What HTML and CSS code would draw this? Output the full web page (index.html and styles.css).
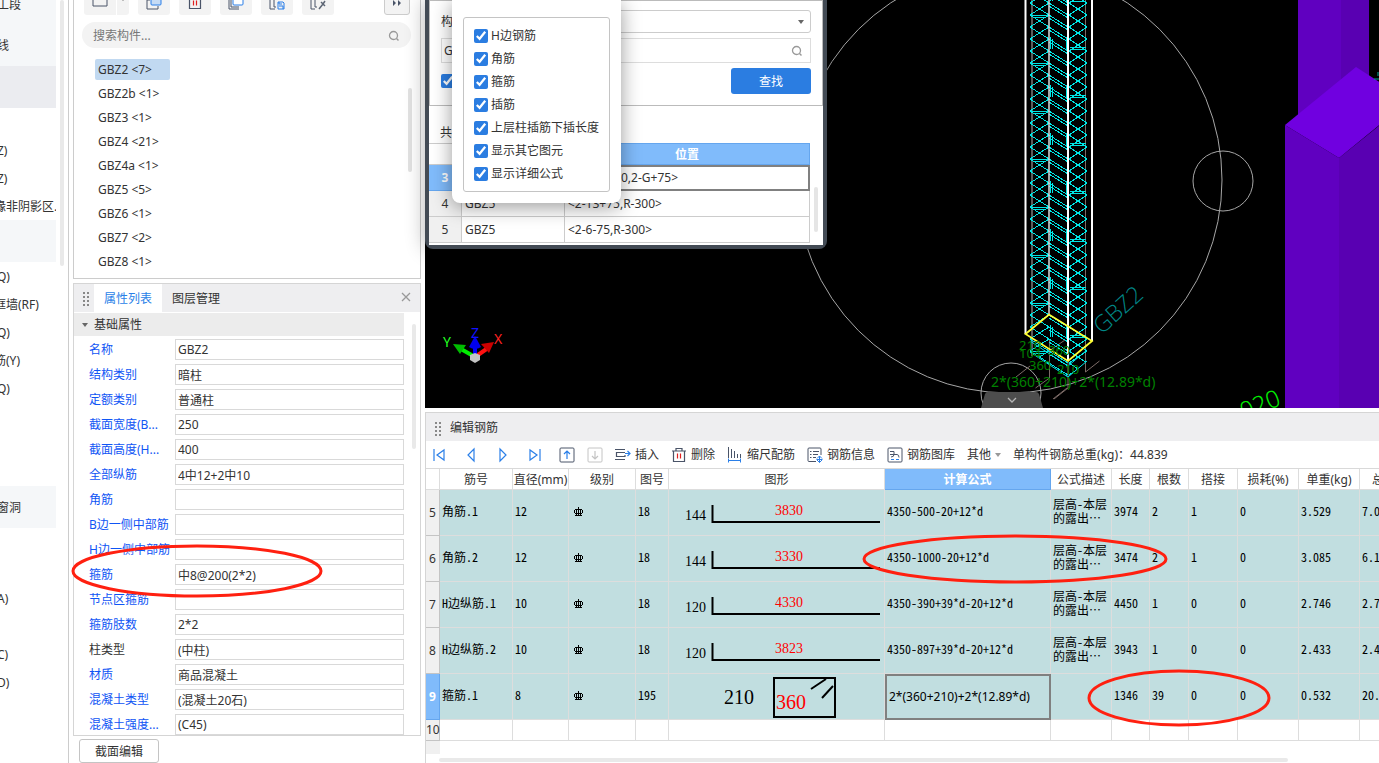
FILE: index.html
```html
<!DOCTYPE html>
<html lang="zh-CN">
<head>
    <meta charset="UTF-8">
    <meta name="viewport" content="width=device-width, initial-scale=1.0">
    <title>编辑钢筋</title>
    <link rel="stylesheet" href="styles.css">
</head>
<body>
    <svg class="sprite" width="0" height="0" aria-hidden="true">
        <symbol id="search" viewBox="0 0 12 12"><circle cx="5.5" cy="5.5" r="4" fill="none" stroke="#999" stroke-width="1.3"/><path d="M8.5 8.5l2 2" stroke="#999" stroke-width="1.5"/></symbol>
        <symbol id="trash" viewBox="0 0 16 16"><path d="M1 4h14M5 4V1.500h6V4M2.500 4v10.500h11V4" fill="none" stroke="#4a5468" stroke-width="1.200"/><path d="M6.500 6.500v5M9.500 6.500v5" stroke="#e02020" stroke-width="1.200"/></symbol>
        <symbol id="grade" viewBox="0 0 10 10"><path d="M4.500 0v9M2.500 2v7M6.500 2v7M1 2.500h7M0.500 3v3M8.500 3v3M1 6.500h7M1 8.500h7" fill="none" stroke="#000" shape-rendering="crispEdges"/></symbol>
    </svg>

    <div class="app">
        <nav class="nav">
            <a href="#" class="nav-first shade">工段</a>
            <a href="#" class="nav-group shade">线</a>
            <a href="#" class="nav-group current"></a>
            <a href="#"></a>
            <a href="#">Z)</a>
            <a href="#">Z)</a>
            <a href="#" class="long">缘非阴影区.</a>
            <a href="#" class="nav-group shade"></a>
            <a href="#">Q)</a>
            <a href="#" class="long">框墙(RF)</a>
            <a href="#">Q)</a>
            <a href="#" class="long">筋(Y)</a>
            <a href="#">Q)</a>
            <a href="#" class="nav-group"></a>
            <a href="#" class="nav-group"></a>
            <a href="#" class="nav-group shade">窗洞</a>
            <a href="#"></a>
            <a href="#"></a>
            <a href="#">A)</a>
            <a href="#"></a>
            <a href="#">C)</a>
            <a href="#">D)</a>
            <span class="nav-scroll"></span>
        </nav>

        <aside class="side">
            <section class="list-panel">
                <div class="list-tools">
                    <button class="split" aria-label="新建"><svg width="16" height="16"><path d="M1 1h14v14H1z" fill="none" stroke="#4a5468"/></svg><i class="caret"></i></button>
                    <button aria-label="复制"><svg width="16" height="16"><path d="M4 6H1v9h11v-3" fill="none" stroke="#4a5468"/><rect x="5" y="1" width="10" height="10" rx="1" fill="#c5dbf5" stroke="#2a7fe8"/></svg></button>
                    <button aria-label="删除"><svg width="16" height="16"><use href="#trash"/></svg></button>
                    <button aria-label="层间复制"><svg width="16" height="16"><path d="M1 3v12h10M3 3v10h8" fill="none" stroke="#4a5468"/><rect x="5" y="1" width="10" height="10" rx="1" fill="#fff" stroke="#2a7fe8"/></svg></button>
                    <button aria-label="存档"><svg width="16" height="16"><path d="M6 15H1V1M5 1v12h2M10 3v2M14 3v2" fill="none" stroke="#4a5468"/><path d="M9 8h5l1 1v6H9zM10 12h4v3M10 8v2h3" fill="none" stroke="#2a7fe8"/></svg></button>
                    <button aria-label="拾取"><svg width="16" height="16"><path d="M5 15H1V1M5 1v12h2M10 3v2" fill="none" stroke="#4a5468"/><path d="M9 15l4-5M11 8l4 4M13 10l2-3" stroke="#5d6675" stroke-width="1.500"/></svg></button>
                    <button class="more" aria-label="更多"><svg width="12" height="16"><path d="M2 6l3 3-3 3zM7 6l3 3-3 3z" fill="#4a5468"/></svg></button>
                </div>
                <div class="search">
                    <input type="text" placeholder="搜索构件..." aria-label="搜索构件">
                    <svg width="12" height="12"><use href="#search"/></svg>
                </div>
                <ul class="tree">
                    <li class="selected">GBZ2 &lt;7&gt;</li>
                    <li>GBZ2b &lt;1&gt;</li>
                    <li>GBZ3 &lt;1&gt;</li>
                    <li>GBZ4 &lt;21&gt;</li>
                    <li>GBZ4a &lt;1&gt;</li>
                    <li>GBZ5 &lt;5&gt;</li>
                    <li>GBZ6 &lt;1&gt;</li>
                    <li>GBZ7 &lt;2&gt;</li>
                    <li>GBZ8 &lt;1&gt;</li>
                </ul>
                <span class="list-scroll"></span>
            </section>

            <section class="props">
                <div class="tabs">
                    <span class="grip"></span>
                    <button class="tab active">属性列表</button>
                    <button class="tab">图层管理</button>
                    <button class="close" aria-label="关闭"><svg width="10" height="10"><path d="M1 1l8 8M9 1l-8 8" stroke="#999" stroke-width="1.300"/></svg></button>
                </div>
                <div class="props-body">
                    <h3><i class="caret"></i>基础属性</h3>
                    <div class="row"><label for="p1">名称</label><input id="p1" value="GBZ2"></div>
                    <div class="row"><label for="p2">结构类别</label><input id="p2" value="暗柱"></div>
                    <div class="row"><label for="p3">定额类别</label><input id="p3" value="普通柱"></div>
                    <div class="row"><label for="p4">截面宽度(B...</label><input id="p4" value="250"></div>
                    <div class="row"><label for="p5">截面高度(H...</label><input id="p5" value="400"></div>
                    <div class="row"><label for="p6">全部纵筋</label><input id="p6" value="4中12+2中10"></div>
                    <div class="row"><label for="p7">角筋</label><input id="p7"></div>
                    <div class="row"><label for="p8">B边一侧中部筋</label><input id="p8"></div>
                    <div class="row"><label for="p9">H边一侧中部筋</label><input id="p9"></div>
                    <div class="row"><label for="p10">箍筋</label><input id="p10" value="中8@200(2*2)"></div>
                    <div class="row"><label for="p11">节点区箍筋</label><input id="p11"></div>
                    <div class="row"><label for="p12">箍筋肢数</label><input id="p12" value="2*2"></div>
                    <div class="row"><label for="p13" class="plain">柱类型</label><input id="p13" value="(中柱)"></div>
                    <div class="row"><label for="p14">材质</label><input id="p14" value="商品混凝土"></div>
                    <div class="row"><label for="p15">混凝土类型</label><input id="p15" value="(混凝土20石)"></div>
                    <div class="row"><label for="p16">混凝土强度...</label><input id="p16" value="(C45)"></div>
                    <span class="props-scroll"></span>
                </div>
            </section>
            <button class="section-edit">截面编辑</button>
        </aside>

        <main class="main">
            <section class="canvas">
                <svg class="model" viewBox="425 0 954 408" preserveAspectRatio="xMinYMin slice">
                    <defs>
                        <pattern id="ties" patternUnits="userSpaceOnUse" x="1030" y="15" width="58" height="48">
                            <path fill="none" stroke="#00e5e5" shape-rendering="crispEdges" d="
                                M19 -12L0 0L19 12M19 0L0 12L19 24M19 12L0 24L19 36M19 24L0 36L19 48M19 36L0 48L19 60
                                M19 -12l19 12M19 -9l19 12M19 0l19 12M19 3l19 12M19 12l19 12M19 15l19 12M19 24l19 12M19 27l19 12M19 36l19 12M19 39l19 12
                                M39 -12L57 0L39 12M39 0L57 12L39 24M39 12L57 24L39 36M39 24L57 36L39 48M39 36L57 48L39 60
                                M1 0.500h17M3 2.500h13M40 32.500h16M40 34.500h16M20.500 22v12M22.500 24v10M36.500 24v11"/>
                        </pattern>
                    </defs>
                    <g fill="none" stroke="#a6a6a6">
                        <circle cx="1009" cy="180" r="213"/>
                        <circle cx="1223" cy="181" r="30"/>
                        <circle cx="1011" cy="393" r="30"/>
                    </g>
                    <path d="M1032 0v356" stroke="#5c5c5c" stroke-width="2"/>
                    <path d="M1085.500 0v372l14-11M1049.500 340v38l-14 10M1068 360v28l-14 11M1067 388l-14 11M1065 340l-16 11M1030 366l-14 11" fill="none" stroke="#7d6c68"/>
                    <path d="M1030 0h58v360l-20 17-38-25z" fill="url(#ties)"/>
                    <path d="M1030 352l38 25 19-16M1030 341l38 25 19-16" fill="none" stroke="#00e5e5"/>
                    <path d="M1025.500 0v334M1092 0v341M1068 0v361" stroke="#fff" stroke-width="2"/>
                    <path d="M1049 0v314" stroke="#ddd" stroke-width="1.500"/>
                    <path d="M1025.500 334L1049 314.500L1092 341L1068 361z" fill="none" stroke="#ff3" stroke-width="1.800"/>
                    <g class="dims">
                        <text x="1019" y="350">210</text>
                        <text x="1019" y="358">104</text>
                        <text x="1048" y="355">360</text>
                        <text x="1029" y="370">360</text>
                        <text x="1057" y="374">210</text>
                        <text x="991" y="387" class="sum">2*(360+210)+2*(12.89*d)</text>
                    </g>
                    <text class="mark" transform="translate(1102 335) rotate(-42)">GBZ2</text>
                    <text class="axis-no" transform="translate(1244 420) rotate(-22)">020</text>
                    <path d="M981 408l4-14q1-2 3-2h48q2 0 3 2l4 14z" fill="#4d4d4d"/>
                    <path d="M1008 398l4 4 4-4" fill="none" stroke="#b5b5b5" stroke-width="1.300"/>
                    <path d="M1298 0h43v130h-43z" fill="#6000c0"/>
                    <path d="M1341 0h28v110h-28z" fill="#5900b2"/>
                    <path d="M1285 125l54 33v250h-54z" fill="#6000c0"/>
                    <path d="M1339 158l61-49v299h-61z" fill="#5900b2"/>
                    <path d="M1285 125L1356 67l44 28v13l-61 50z" fill="#7000e0"/>
                    <path d="M1374 79h5M1378 72v4" stroke="#0a9" />
                    <!-- axis tripod -->
                    <path d="M475 357l-14-8" stroke="#0e0" stroke-width="4"/><path d="M453 344l13 1-6 9z" fill="#0b0"/>
                    <path d="M475 357l13-9" stroke="#f11" stroke-width="4"/><path d="M494 342l-13 2 8 9z" fill="#c00"/>
                    <path d="M475 357v-12" stroke="#00f" stroke-width="4"/><path d="M475 336l6 11q-6 4-12 0z" fill="#00e"/>
                    <path d="M470 355l5-2 5 2v5l-5 3-5-3z" fill="#c4c4c4"/>
                    <text class="axis" x="443" y="347" fill="#2f2">Y</text>
                    <text class="axis" x="471" y="338" fill="#11f">Z</text>
                    <text class="axis" x="494" y="344" fill="#f22">X</text>
                </svg>

                <div class="dialog">
                    <div class="find-box">
                        <label for="kind">构</label>
                        <div class="find-kind">
                            <select id="kind"><option></option></select>
                            <i class="caret"></i>
                        </div>
                        <div class="find-name">
                            <input type="text" value="G" aria-label="名称">
                            <svg width="12" height="12"><use href="#search"/></svg>
                        </div>
                        <div class="find-foot">
                            <input type="checkbox" checked aria-label="精确查找">
                            <button class="find-btn">查找</button>
                        </div>
                    </div>
                    <p class="found">共</p>
                    <table class="found-table">
                        <thead><tr><th></th><th></th><th class="hot">位置</th></tr></thead>
                        <tbody>
                            <tr><th class="hot">3</th><td></td><td class="cell-on"><span>0,2-G+75&gt;</span></td></tr>
                            <tr><th>4</th><td>GBZ5</td><td>&lt;2-13+75,R-300&gt;</td></tr>
                            <tr><th>5</th><td>GBZ5</td><td>&lt;2-6-75,R-300&gt;</td></tr>
                        </tbody>
                    </table>
                    <span class="found-scroll"></span>
                    <div class="popup">
                        <div class="popup-box">
                            <label><input type="checkbox" checked>H边钢筋</label>
                            <label><input type="checkbox" checked>角筋</label>
                            <label><input type="checkbox" checked>箍筋</label>
                            <label><input type="checkbox" checked>插筋</label>
                            <label><input type="checkbox" checked>上层柱插筋下插长度</label>
                            <label><input type="checkbox" checked>显示其它图元</label>
                            <label><input type="checkbox" checked>显示详细公式</label>
                        </div>
                    </div>
                </div>
            </section>

            <section class="rebar">
                <div class="rebar-title"><span class="grip"></span>编辑钢筋</div>
                <div class="rebar-tools">
                    <div class="step">
                        <button aria-label="首行"><svg width="16" height="16"><path d="M3 2v12M13 3v10L6 8z" fill="none" stroke="#2a7fe8" stroke-width="1.200"/></svg></button>
                        <button aria-label="上一行"><svg width="16" height="16"><path d="M11 2v12L5 8z" fill="none" stroke="#2a7fe8" stroke-width="1.200"/></svg></button>
                        <button aria-label="下一行"><svg width="16" height="16"><path d="M5 2v12l6-6z" fill="none" stroke="#2a7fe8" stroke-width="1.200"/></svg></button>
                        <button aria-label="末行"><svg width="16" height="16"><path d="M13 2v12M3 3v10l7-5z" fill="none" stroke="#2a7fe8" stroke-width="1.200"/></svg></button>
                    </div>
                    <button aria-label="上移"><svg width="16" height="16"><rect x="1" y="1" width="14" height="14" rx="1" fill="none" stroke="#4a5468"/><path d="M8 12V4M5 7l3-3 3 3" fill="none" stroke="#2a7fe8" stroke-width="1.200"/></svg></button>
                    <button aria-label="下移"><svg width="16" height="16"><rect x="1" y="1" width="14" height="14" rx="1" fill="none" stroke="#c4c4c4"/><path d="M8 4v8M5 9l3 3 3-3" fill="none" stroke="#c4c4c4" stroke-width="1.200"/></svg></button>
                    <button><svg width="16" height="16"><path d="M0 2.500h10M0 12.500h10M10 5.500H1.500v4H10V8" fill="none" stroke="#4a5468" stroke-width="1.200"/><path d="M10 6.500h5M12.500 4l2.500 2.500L12.500 9" fill="none" stroke="#2a7fe8" stroke-width="1.200"/></svg>插入</button>
                    <button><svg width="16" height="16"><use href="#trash"/></svg>删除</button>
                    <button><svg width="16" height="16"><path d="M1.500 0v11M4.500 2v9M7.500 4v7M10.500 7v4M13.500 7v4" stroke="#4a5468"/><path d="M1 13.500h12M1.500 11.500v4M13.500 11.500v4" stroke="#2a7fe8"/></svg>缩尺配筋</button>
                    <button><svg width="16" height="16"><path d="M9 14.500H2q-1 0-1-1V2q0-1 1-1h11q1 0 1 1v6M6 4.500h6M6 7.500h5M6 10.500h3M3 4.500h1.500M3 7.500h1.500M3 10.500h1.500" fill="none" stroke="#4a5468"/><path d="M9.500 12.500h6M12.500 9v6.500M10 11.500l2.500-2.500 2.500 2.500M10 13l2.500 2.500L15 13" fill="none" stroke="#2a7fe8"/></svg>钢筋信息</button>
                    <button><svg width="16" height="16"><rect x="1" y="1" width="14" height="14" rx="1" fill="none" stroke="#4a5468"/><path d="M3 4.500h4v3H3M4 10q3 0 3-2.500h3q2 0 2 3" fill="none" stroke="#4a5468"/><path d="M4 12.500h3M9 12.500h3" stroke="#2a7fe8"/></svg>钢筋图库</button>
                    <button>其他<i class="caret light"></i></button>
                    <span>单构件钢筋总重(kg)：44.839</span>
                </div>
                <div class="rebar-wrap">
                    <table class="rebar-table">
                        <colgroup><col class="c-no"><col class="c-name"><col class="c-dia"><col class="c-grade"><col class="c-fig"><col class="c-shape"><col class="c-calc"><col class="c-desc"><col class="c-len"><col class="c-cnt"><col class="c-lap"><col class="c-loss"><col class="c-wt"><col class="c-total"></colgroup>
                        <thead>
                            <tr><th></th><th>筋号</th><th>直径(mm)</th><th>级别</th><th>图号</th><th>图形</th><th class="hot">计算公式</th><th>公式描述</th><th>长度</th><th>根数</th><th>搭接</th><th>损耗(%)</th><th>单重(kg)</th><th class="cut">总</th></tr>
                        </thead>
                        <tbody>
                            <tr>
                                <th>5</th><td>角筋.1</td><td>12</td><td><svg width="10" height="10"><use href="#grade"/></svg></td><td>18</td>
                                <td class="shape"><svg width="215" height="45"><path d="M43.500 15v17H211" fill="none" stroke="#000" stroke-width="2"/><text x="16" y="30">144</text><text x="106" y="25" class="red">3830</text></svg></td>
                                <td>4350-500-20+12*d</td><td class="desc">层高-本层的露出…</td><td>3974</td><td>2</td><td>1</td><td>0</td><td>3.529</td><td>7.0</td>
                            </tr>
                            <tr>
                                <th>6</th><td>角筋.2</td><td>12</td><td><svg width="10" height="10"><use href="#grade"/></svg></td><td>18</td>
                                <td class="shape"><svg width="215" height="45"><path d="M43.500 15v17H211" fill="none" stroke="#000" stroke-width="2"/><text x="16" y="30">144</text><text x="106" y="25" class="red">3330</text></svg></td>
                                <td>4350-1000-20+12*d</td><td class="desc">层高-本层的露出…</td><td>3474</td><td>2</td><td>1</td><td>0</td><td>3.085</td><td>6.1</td>
                            </tr>
                            <tr>
                                <th>7</th><td>H边纵筋.1</td><td>10</td><td><svg width="10" height="10"><use href="#grade"/></svg></td><td>18</td>
                                <td class="shape"><svg width="215" height="45"><path d="M43.500 15v17H211" fill="none" stroke="#000" stroke-width="2"/><text x="16" y="30">120</text><text x="106" y="25" class="red">4330</text></svg></td>
                                <td>4350-390+39*d-20+12*d</td><td class="desc">层高-本层的露出…</td><td>4450</td><td>1</td><td>0</td><td>0</td><td>2.746</td><td>2.7</td>
                            </tr>
                            <tr>
                                <th>8</th><td>H边纵筋.2</td><td>10</td><td><svg width="10" height="10"><use href="#grade"/></svg></td><td>18</td>
                                <td class="shape"><svg width="215" height="45"><path d="M43.500 15v17H211" fill="none" stroke="#000" stroke-width="2"/><text x="16" y="30">120</text><text x="106" y="25" class="red">3823</text></svg></td>
                                <td>4350-897+39*d-20+12*d</td><td class="desc">层高-本层的露出…</td><td>3943</td><td>1</td><td>0</td><td>0</td><td>2.433</td><td>2.4</td>
                            </tr>
                            <tr>
                                <th class="hot">9</th><td>箍筋.1</td><td>8</td><td><svg width="10" height="10"><use href="#grade"/></svg></td><td>195</td>
                                <td class="shape"><svg width="215" height="45"><path d="M105 4h61v39h-61zM142 15l15-10M153 24l11-12" fill="none" stroke="#000" stroke-width="2"/><text x="55" y="30" class="big">210</text><text x="107" y="35" class="big red">360</text></svg></td>
                                <td class="cell-on">2*(360+210)+2*(12.89*d)</td><td></td><td>1346</td><td>39</td><td>0</td><td>0</td><td>0.532</td><td>20.</td>
                            </tr>
                            <tr class="blank"><th>10</th><td></td><td></td><td></td><td></td><td></td><td></td><td></td><td></td><td></td><td></td><td></td><td></td><td></td></tr>
                        </tbody>
                    </table>
                    <div class="rebar-foot"></div>
                    <div class="rebar-scroll"></div>
                </div>
            </section>
        </main>

        <svg class="notes" width="1379" height="763">
            <ellipse cx="197" cy="571" rx="124" ry="25"/>
            <ellipse cx="1015" cy="559" rx="151" ry="23"/>
            <ellipse cx="1179" cy="698" rx="90" ry="27"/>
        </svg>
    </div>
</body>
</html>
```
FILE: styles.css
```css
:root {
    --text: #333;
    --blue: #2a7fe8;
    --label: #0f55f5;
    --hot: #80bbfb;
    --line: #d9d9d9;
    --panel: #eeeef0;
    --teal: #c1dee0;
}

* {
    box-sizing: border-box;
    margin: 0;
    padding: 0;
}

body {
    background: #fff;
    color: var(--text);
    font-family: "Noto Sans", "Noto Sans CJK SC", sans-serif;
    font-size: 12px;
    line-height: 16px;
    overflow: hidden;
}

button,
input,
select {
    font: inherit;
    color: inherit;
    border: none;
    background: none;
}

button {
    cursor: pointer;
}

.sprite {
    position: absolute;
}

.app {
    display: flex;
    height: 100vh;
    position: relative;
}

.caret {
    display: inline-block;
    border: 3px solid transparent;
    border-top: 4px solid #666;
    border-bottom: none;
}

.caret.light {
    border-top-color: #999;
}

.grip {
    width: 8px;
    height: 15px;
    background: radial-gradient(circle, #888 1px, transparent 1px) 0 0 / 4px 4px;
}

/* left navigation */
.nav {
    position: relative;
    flex: none;
    width: 69px;
    overflow: hidden;
    border-right: 1px solid #ccc;
}

.nav a {
    display: block;
    width: 56px;
    height: 28px;
    line-height: 30px;
    text-indent: -3px;
    white-space: nowrap;
    color: var(--text);
    text-decoration: none;
    overflow: hidden;
}

.nav a.long {
    text-indent: -6px;
}

.nav a.nav-group {
    height: 42px;
    line-height: 44px;
}

.nav a.nav-first {
    height: 24px;
    line-height: 10px;
}

.nav a.shade {
    background: #f5f7f9;
}

.nav a.current {
    background: #ebecf0;
}

.nav-scroll {
    position: absolute;
    top: 0;
    left: 60px;
    width: 4px;
    height: 266px;
    border-radius: 2px;
    background: #e9e9e9;
}

/* component list + properties */
.side {
    display: flex;
    flex-direction: column;
    flex: none;
    width: 352px;
    padding-left: 4px;
}

.list-panel {
    position: relative;
    flex: 1;
    min-height: 0;
    border: 1px solid #ccc;
    border-top: none;
    overflow: hidden;
}

.list-tools {
    display: flex;
    align-items: flex-end;
    gap: 9px;
    height: 15px;
    padding: 0 10px;
}

.list-tools button {
    flex: none;
    width: 32px;
    height: 32px;
    padding-top: 8px;
    border-radius: 3px;
    background: #f3f3f3;
    line-height: 12px;
}

.list-tools .split {
    display: flex;
    gap: 12px;
    align-items: center;
    width: 45px;
    padding: 0 3px 0 8px;
    background: linear-gradient(90deg, #f3f3f3 32px, #fff 32px, #fff 33px, #f3f3f3 33px);
}

.list-tools .more {
    width: 26px;
    margin-left: auto;
    border: 1px solid #ccc;
}

.search {
    display: flex;
    align-items: center;
    height: 26px;
    margin: 7px 9px 0 8px;
    padding: 2px 11px 0;
    border-radius: 13px;
    background: #f3f3f3;
}

.search input {
    flex: 1;
    outline: none;
}

.search input::placeholder {
    color: #777;
}

.tree {
    list-style: none;
    padding: 11px 0 0 21px;
}

.tree li {
    width: 75px;
    height: 21px;
    margin-bottom: 3px;
    padding-left: 3px;
    line-height: 21px;
    border-radius: 2px;
    white-space: nowrap;
}

.tree .selected {
    background: #c1d9f1;
}

.list-scroll {
    position: absolute;
    top: 88px;
    right: 8px;
    width: 4px;
    height: 84px;
    border-radius: 2px;
    background: #e2e2e2;
}

.props {
    flex: none;
    margin-top: 4px;
    border: 1px solid #d5d5d5;
}

.tabs {
    display: flex;
    align-items: center;
    height: 28px;
    background: var(--panel);
}

.tabs .grip {
    margin: 0 4px 0 8px;
}

.tab {
    height: 28px;
    padding: 2px 10px 0;
}

.tab.active {
    background: #fff;
    color: var(--blue);
}

.close {
    margin-left: auto;
    padding-right: 9px;
}

.props-body {
    position: relative;
    height: 423px;
    padding: 1px 16px 0 0;
    overflow: hidden;
}

.props-body h3 {
    display: flex;
    align-items: center;
    gap: 6px;
    height: 23px;
    margin-bottom: 3px;
    padding-left: 8px;
    background: #ececec;
    font-size: 12px;
    font-weight: 400;
}

.row {
    display: flex;
    align-items: center;
    height: 21px;
    margin-bottom: 4px;
    padding-left: 15px;
    white-space: nowrap;
}

.row label {
    flex: none;
    width: 86px;
    color: var(--label);
}

.row label.plain {
    color: var(--text);
}

.row input {
    flex: 1;
    min-width: 0;
    height: 21px;
    padding: 0 2px;
    border: 1px solid var(--line);
}

.props-scroll {
    position: absolute;
    top: 12px;
    right: 4px;
    width: 4px;
    height: 125px;
    border-radius: 2px;
    background: #e9e9e9;
}

.section-edit {
    flex: none;
    width: 80px;
    height: 24px;
    margin: 3px 0 0 6px;
    padding-top: 1px;
    border: 1px solid #c4c4c4;
    border-radius: 3px;
}

/* drawing area */
.main {
    display: flex;
    flex-direction: column;
    flex: 1;
    min-width: 0;
    padding-left: 4px;
}

.canvas {
    position: relative;
    flex: 1;
    min-height: 0;
    background: #000;
}

.model {
    display: block;
    width: 100%;
    height: 100%;
}

.dims {
    fill: #008000;
    font-size: 13px;
}

.sum {
    font-size: 14px;
}

.mark {
    fill: #008888;
    font-family: "Open Sans", sans-serif;
    font-size: 23px;
    font-weight: 300;
}

.axis-no {
    fill: #0e0;
    font-size: 24px;
    font-weight: 300;
}

.axis {
    font-size: 14px;
}

.dialog {
    position: absolute;
    top: 0;
    left: 0;
    width: 402px;
    padding: 0 4px 4px;
    background: #434b55;
    border-radius: 0 0 8px 8px;
    box-shadow: 0 0 20px rgba(0, 0, 0, 0.3);
}

.find-box {
    display: grid;
    grid-template-columns: 12px 1fr;
    align-items: center;
    height: 106px;
    padding: 9px 11px 11px;
    border: 1px solid #bbb;
    background: #fff;
}

.find-kind {
    display: flex;
    align-items: center;
    height: 23px;
    margin-left: 30px;
    padding-right: 6px;
    border: 1px solid #ccc;
    border-radius: 3px;
}

.find-kind select {
    flex: 1;
    appearance: none;
}

.find-name {
    grid-column: 1 / 3;
    display: flex;
    align-items: center;
    height: 25px;
    margin-top: 5px;
    padding: 0 7px 0 2px;
    border: 1px solid #ddd;
}

.find-name input {
    flex: 1;
}

.find-foot {
    grid-column: 1 / 3;
    display: flex;
    align-items: center;
    justify-content: space-between;
    margin-top: 5px;
}

input[type="checkbox"] {
    flex: none;
    width: 14px;
    height: 14px;
    accent-color: #2b7de1;
}

.find-btn {
    width: 80px;
    height: 26px;
    padding-top: 1px;
    border-radius: 3px;
    background: #2b7de1;
    color: #fff;
}

.found {
    height: 37px;
    padding: 19px 11px 0;
    background: #fff;
}

.found-table {
    width: 100%;
    border-right: 13px solid #fff;
    border-bottom: 2px solid #fff;
    border-spacing: 0;
    table-layout: fixed;
    background: #fff;
    line-height: 16px;
}

.found-table th:first-child {
    width: 33px;
}

.found-table th:nth-child(2) {
    width: 103px;
}

.found-table th,
.found-table td {
    height: 26px;
    padding: 0 3px;
    border-right: 1px solid #ccc;
    border-bottom: 1px solid #ccc;
    font-weight: 400;
}

.found-table thead th {
    height: 22px;
    padding-top: 1px;
    border-top: 1px solid #ccc;
}

.found-table tbody th {
    background: #f0f0f0;
}

.found-table .hot,
.rebar-table .hot {
    background: var(--hot);
    border-color: #65a6ee;
    color: #fff;
    font-weight: 700;
}

.found-table .cell-on {
    padding-left: 56px;
    border: 2px solid #808080;
    border-left: none;
}

.found-scroll {
    position: absolute;
    right: 9px;
    bottom: 17px;
    width: 4px;
    height: 45px;
    border-radius: 2px;
    background: #e5e5e5;
}

.popup {
    position: absolute;
    top: 0;
    left: 27px;
    width: 169px;
    height: 203px;
    padding: 17px 11px 11px;
    background: #fff;
    border-radius: 0 0 8px 8px;
    box-shadow: 0 4px 20px rgba(0, 0, 0, 0.4);
}

.popup-box {
    height: 175px;
    padding: 6px 0 0 10px;
    border: 1px solid #c4c4c4;
    border-radius: 3px;
}

.popup label {
    display: flex;
    align-items: center;
    gap: 3px;
    height: 23px;
    white-space: nowrap;
}

/* rebar editor */
.rebar {
    flex: none;
    height: 351px;
    margin-top: 4px;
    border: 1px solid #d5d5d5;
    border-width: 1px 0 0 1px;
    overflow: hidden;
}

.rebar-title {
    display: flex;
    align-items: center;
    gap: 8px;
    height: 28px;
    padding: 2px 0 0 8px;
    background: var(--panel);
}

.rebar-tools {
    display: flex;
    align-items: center;
    gap: 12px;
    height: 27px;
    padding-left: 5px;
    white-space: nowrap;
}

.rebar-tools button {
    display: flex;
    align-items: center;
    gap: 4px;
}

.rebar-tools .step {
    display: flex;
    gap: 16px;
    margin-right: 4px;
}

.rebar-wrap {
    overflow: hidden;
}

.rebar-table {
    width: 1016px;
    border-spacing: 0;
    border-top: 1px solid var(--line);
    table-layout: fixed;
}

.c-no { width: 14px; }
.c-name { width: 73px; }
.c-dia { width: 56px; }
.c-grade { width: 67px; }
.c-fig { width: 33px; }
.c-shape { width: 216px; }
.c-calc { width: 166px; }
.c-desc { width: 61px; }
.c-len { width: 38px; }
.c-cnt { width: 39px; }
.c-lap { width: 49px; }
.c-loss { width: 61px; }
.c-wt { width: 61px; }
.c-total { width: 82px; }

.rebar-table th,
.rebar-table td {
    border-right: 1px solid #ddd;
    border-bottom: 1px solid #ddd;
    font-weight: 400;
    white-space: nowrap;
}

.rebar-table thead th {
    height: 21px;
    padding-top: 2px;
}

.rebar-table thead .cut {
    padding-left: 12px;
    text-align: left;
}

.rebar-table tbody th {
    background: #f0f0f0;
    border-color: #c4c4c4;
}

.rebar-table td {
    height: 46px;
    padding: 0 2px 4px;
    background: var(--teal);
    color: #000;
    font-family: "Noto Sans CJK SC", sans-serif;
    font-feature-settings: "hwid";
    line-height: 14px;
}

.rebar-table td svg {
    display: block;
    margin: 3px 0 0 3px;
}

.rebar-table .desc {
    padding-right: 0;
    white-space: normal;
}

.rebar-table .shape {
    padding: 0;
}

.rebar-table .shape svg {
    margin: 0;
}

.shape text {
    font-family: "Liberation Serif", serif;
    font-size: 14px;
}

.shape .big {
    font-size: 20px;
}

.shape .red {
    fill: #f00;
}

.rebar-table .cell-on {
    padding: 0 2px;
    border: 2px solid #808080;
    font-family: "Noto Sans", sans-serif;
    font-feature-settings: normal;
}

.rebar-table .blank td {
    height: 21px;
    background: #fff;
}

.rebar-foot {
    width: 14px;
    height: 13px;
    background: #f0f0f0;
}

.rebar-scroll {
    width: 849px;
    height: 4px;
    margin: 4px 0 0 13px;
    border-radius: 2px;
    background: #e9e9e9;
}

/* review marks */
.notes {
    position: absolute;
    top: 0;
    left: 0;
    pointer-events: none;
}

.notes ellipse {
    fill: none;
    stroke: #ff2010;
    stroke-width: 3;
}
```
